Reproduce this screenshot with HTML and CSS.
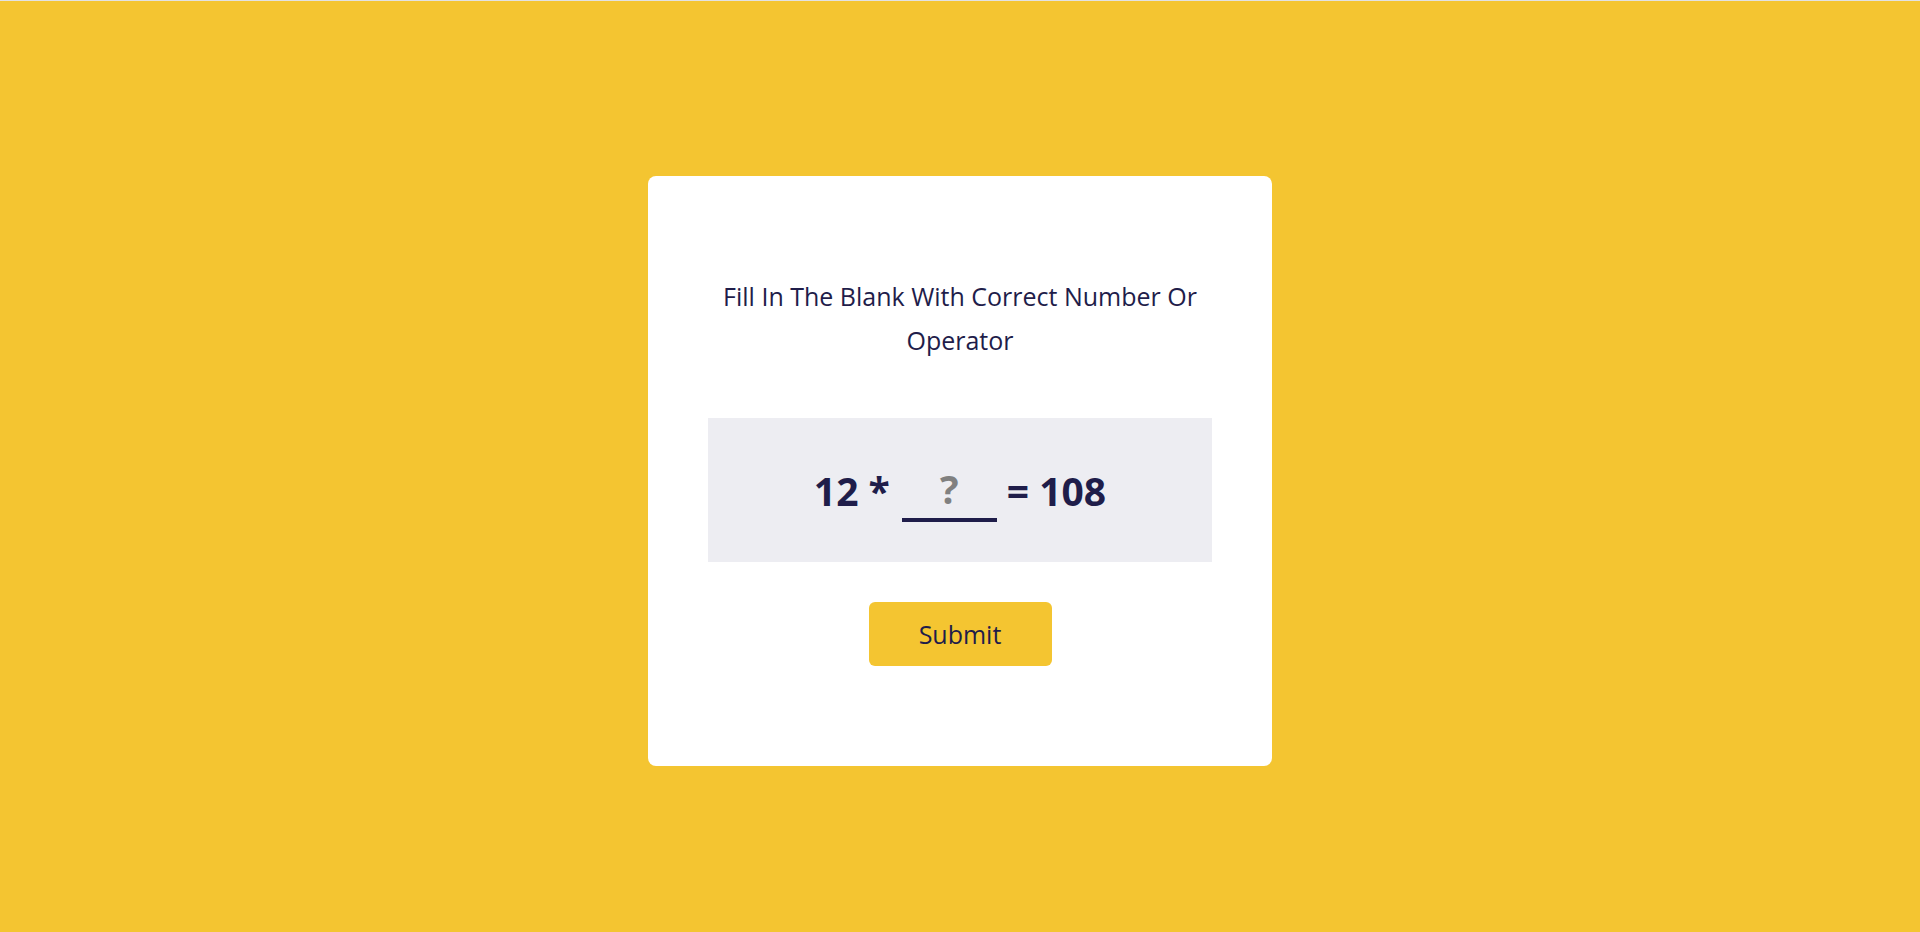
FILE: index.html
```html
<!DOCTYPE html>
<html lang="en">
<head>
<meta charset="utf-8">
<title>Fill In The Blank</title>
<link rel="stylesheet" href="styles.css">
</head>
<body>
  <main class="card">
    <h1 class="title">Fill In The Blank With Correct Number Or Operator</h1>
    <div class="equation">
      <span class="term">12 *</span>
      <input class="blank" type="text" placeholder="?">
      <span class="term">= 108</span>
    </div>
    <button class="submit" type="button">Submit</button>
  </main>
</body>
</html>
```

FILE: styles.css
```css
* {
  box-sizing: border-box;
}

html, body {
  margin: 0;
  padding: 0;
}

body {
  min-height: 100vh;
  background: #f4c531;
  border-top: 1px solid #e2e2e2;
  padding-top: 9px;
  display: flex;
  align-items: center;
  justify-content: center;
  font-family: "Open Sans", "Liberation Sans", sans-serif;
  color: #1f1d4a;
}

.card {
  width: 624px;
  background: #ffffff;
  border-radius: 8px;
  padding: 98px 60px 100px;
  display: flex;
  flex-direction: column;
  align-items: center;
}

.title {
  margin: 0;
  font-size: 25px;
  font-weight: 400;
  line-height: 44px;
  text-align: center;
  color: #1f1d4a;
}

.equation {
  margin-top: 56px;
  width: 100%;
  height: 144px;
  background: #ededf2;
  display: flex;
  align-items: center;
  justify-content: center;
  gap: 10px;
}

.term {
  font-size: 39px;
  font-weight: 700;
  color: #1f1d4a;
  line-height: 1;
}

.term:first-child {
  margin-right: 2px;
}

.blank {
  width: 95px;
  height: 64px;
  border: none;
  border-bottom: 4px solid #1f1d4a;
  background: transparent;
  font-family: inherit;
  font-size: 39px;
  font-weight: 700;
  color: #1f1d4a;
  text-align: center;
  padding: 0;
  outline: none;
}

.blank::placeholder {
  color: #808080;
  opacity: 1;
}

.submit {
  margin-top: 40px;
  width: 183px;
  height: 64px;
  border: none;
  border-radius: 6px;
  background: #f4c531;
  color: #1f1d4a;
  font-family: inherit;
  font-size: 25px;
  font-weight: 400;
  cursor: pointer;
}
```
